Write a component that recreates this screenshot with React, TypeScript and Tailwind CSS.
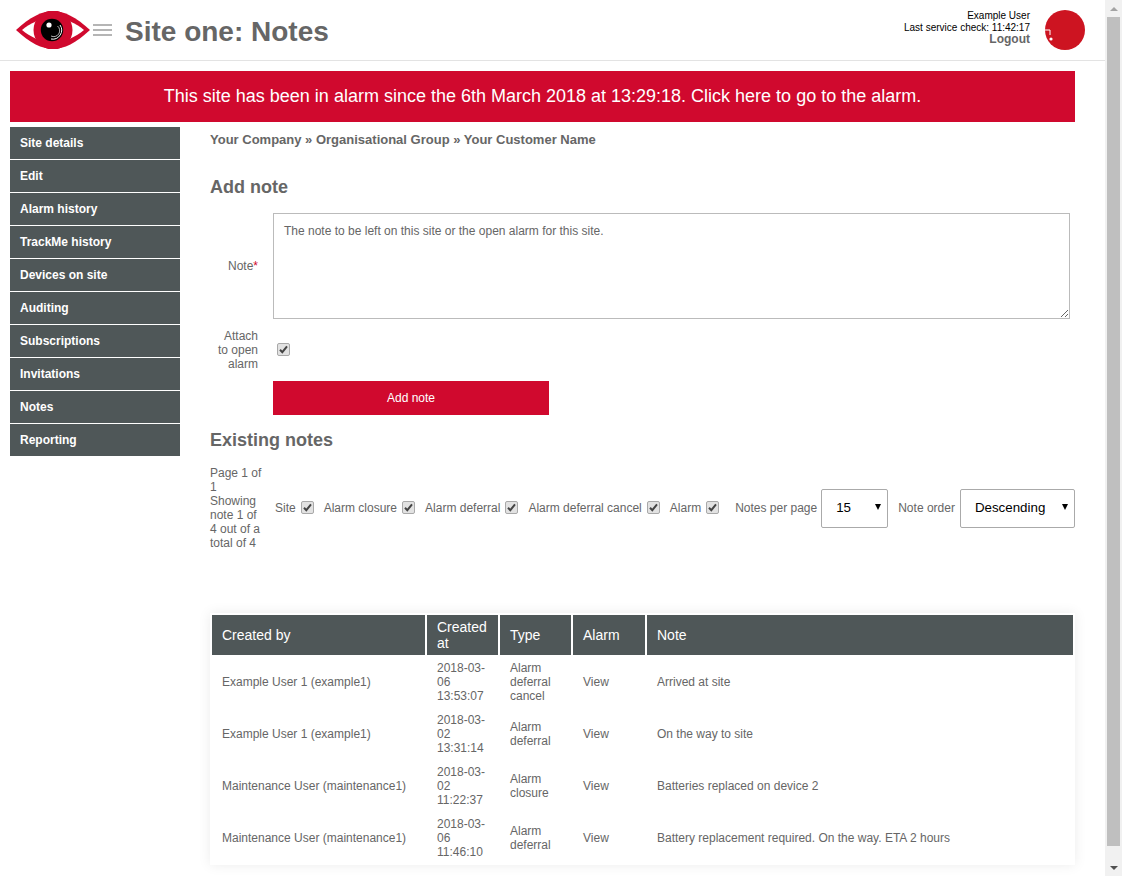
const font = "font-['Liberation_Sans',Arial,sans-serif]";

const sideItems = [
  "Site details",
  "Edit",
  "Alarm history",
  "TrackMe history",
  "Devices on site",
  "Auditing",
  "Subscriptions",
  "Invitations",
  "Notes",
  "Reporting",
];

const filters = ["Site", "Alarm closure", "Alarm deferral", "Alarm deferral cancel", "Alarm"];

const rows = [
  ["Example User 1 (example1)", "2018-03-06 13:53:07", "Alarm deferral cancel", "Arrived at site"],
  ["Example User 1 (example1)", "2018-03-02 13:31:14", "Alarm deferral", "On the way to site"],
  ["Maintenance User (maintenance1)", "2018-03-02 11:22:37", "Alarm closure", "Batteries replaced on device 2"],
  ["Maintenance User (maintenance1)", "2018-03-06 11:46:10", "Alarm deferral", "Battery replacement required. On the way. ETA 2 hours"],
];

function EyeLogo() {
  return (
    <svg width="74" height="38" viewBox="0 0 74 38" className="shrink-0">
      <path d="M0 19 C14 6 26 0 37 0 C48 0 60 6 74 19 C60 32 48 38 37 38 C26 38 14 32 0 19 Z" fill="#d0092e" />
      <path d="M6 19 C14 12 25 7 37 7 C49 7 60 12 68 19 C60 26 49 31 37 31 C25 31 14 26 6 19 Z" fill="#fff" />
      <circle cx="37" cy="19" r="19.5" fill="#d0092e" />
      <circle cx="36" cy="19" r="11.2" fill="#000" />
      <path d="M44 14 A9 9 0 0 1 35 28" fill="none" stroke="#fff" strokeWidth="1" />
      <path d="M41.5 15 A6 6 0 0 1 35 25" fill="none" stroke="#ddd" strokeWidth="0.8" />
      <circle cx="33" cy="14" r="2.6" fill="#fff" />
    </svg>
  );
}

function Tick() {
  return (
    <span className="relative -mt-[1px] block h-[13px] w-[13px] shrink-0">
      <input
        type="checkbox"
        defaultChecked
        className="m-0 block h-[13px] w-[13px] appearance-none rounded-[2px] border border-[#a9a9a9] bg-[#e2e2e2]"
      />
      <svg width="13" height="13" viewBox="0 0 13 13" className="pointer-events-none absolute left-0 top-0">
        <path d="M3 6.8 L5.3 9.2 L10 3.4" fill="none" stroke="#444" strokeWidth="2" />
      </svg>
    </span>
  );
}

function Select({ value, width }: { value: string; width: string }) {
  return (
    <div className={`relative flex h-[39px] items-center rounded-[2px] border border-[#aaa] bg-white pl-[14px] text-[13.33px] text-black ${width}`}>
      {value}
      <span className="absolute right-[6px] top-[14px] h-0 w-0 border-x-[3.5px] border-t-[6px] border-x-transparent border-t-black" />
    </div>
  );
}

export default function App() {
  return (
    <div className={`${font} flex h-[876px] w-[1122px] overflow-hidden bg-white text-[12px] text-[#666]`}>
      <div className="w-[1105px] shrink-0">
        <header className="flex h-[61px] items-center border-b border-[#e3e3e3] pl-[16px] pr-[20px]">
          <EyeLogo />
          <div className="ml-[3px] flex w-[19px] flex-col gap-[3px]">
            <span className="h-[2px] bg-[#b5b5b5]" />
            <span className="h-[2px] bg-[#b5b5b5]" />
            <span className="h-[2px] bg-[#b5b5b5]" />
          </div>
          <h1 className="ml-[13px] pt-[4px] text-[28px] font-bold leading-none">Site one: Notes</h1>
          <div className="ml-auto flex items-center gap-[15px]">
            <div className="mb-[5px] text-right text-[10px] leading-[12px] text-black">
              <div>Example User</div>
              <div>Last service check: 11:42:17</div>
              <div className="text-[12px] font-bold leading-[11px] text-[#666]">Logout</div>
            </div>
            <div className="relative h-[40px] w-[40px] rounded-full bg-[#cd1421]">
              <svg width="10" height="14" viewBox="0 0 10 14" className="absolute left-0 top-[19px]">
                <path d="M0 1 H5 V6" fill="none" stroke="#fff" strokeWidth="1" />
                <circle cx="6" cy="10" r="1.6" fill="#fff" />
              </svg>
            </div>
          </div>
        </header>

        <div className="mx-[10px] mt-[10px] flex h-[51px] w-[1065px] items-center justify-center bg-[#d0092e] text-[18px] text-white">
          This site has been in alarm since the 6th March 2018 at 13:29:18. Click here to go to the alarm.
        </div>

        <div className="mt-[5px] flex pl-[10px]">
          <nav className="flex w-[170px] shrink-0 flex-col gap-[1px]">
            {sideItems.map((item) => (
              <div key={item} className="flex h-[32px] items-center bg-[#4f5758] pl-[10px] text-[12px] font-bold text-white">
                {item}
              </div>
            ))}
          </nav>

          <main className="ml-[30px] w-[865px]">
            <div className="pt-[4px] text-[13px] font-bold leading-[18px]">
              Your Company » Organisational Group » Your Customer Name
            </div>

            <h2 className="mt-[27px] text-[18px] font-bold leading-[22px]">Add note</h2>

            <div className="mt-[15px] flex items-center">
              <div className="w-[48px] text-right">
                Note<span className="text-[#d0092e]">*</span>
              </div>
              <textarea
                readOnly
                className="ml-[15px] h-[106px] w-[797px] border border-[#bbb] px-[10px] py-[10px] text-[12px] leading-[14px] text-[#666] outline-none"
                defaultValue="The note to be left on this site or the open alarm for this site."
              />
            </div>

            <div className="mt-[10px] flex items-center">
              <div className="w-[48px] text-right leading-[14px]">
                Attach
                <br />
                to open
                <br />
                alarm
              </div>
              <div className="ml-[19px] flex"><Tick /></div>
            </div>

            <button className="ml-[63px] mt-[10px] block h-[34px] w-[276px] bg-[#d0092e] text-[12px] text-white">
              Add note
            </button>

            <h2 className="mt-[14px] text-[18px] font-bold leading-[22px]">Existing notes</h2>

            <div className="mt-[15px] flex items-center">
              <div className="w-[55px] leading-[14px]">
                Page 1 of 1<br />Showing note 1 of 4 out of a total of 4
              </div>
              <div className="ml-[10px] flex items-center gap-[10px]">
                {filters.map((f) => (
                  <label key={f} className="flex items-center gap-[5px]">
                    {f}
                    <Tick />
                  </label>
                ))}
              </div>
              <span className="ml-[16px]">Notes per page</span>
              <div className="ml-[4px]"><Select value="15" width="w-[67px]" /></div>
              <span className="ml-[10px]">Note order</span>
              <div className="ml-[5px]"><Select value="Descending" width="w-[115px]" /></div>
            </div>

            <div className="mt-[63px] bg-white px-[2px] pb-[1px] pt-[2px] shadow-[0_0_12px_rgba(0,0,0,0.08)]">
              <div className="grid grid-cols-[213px_71px_71px_72px_1fr] gap-x-[2px]">
                {["Created by", "Created at", "Type", "Alarm", "Note"].map((h) => (
                  <div key={h} className="flex h-[40px] items-center bg-[#4f5758] px-[10px] text-[14px] leading-[16px] text-white">
                    {h}
                  </div>
                ))}
                {rows.map((r, i) => (
                  <div key={i} className="contents">
                    <div className={`flex items-center px-[10px] ${i === 0 ? "h-[53px]" : "h-[52px]"}`}>{r[0]}</div>
                    <div className="flex items-center px-[10px] leading-[14px]">{r[1]}</div>
                    <div className="flex items-center px-[10px] leading-[14px]">{r[2]}</div>
                    <div className="flex items-center px-[10px]">View</div>
                    <div className="flex items-center px-[10px]">{r[3]}</div>
                  </div>
                ))}
              </div>
            </div>
          </main>
        </div>
      </div>

      <div className="flex w-[17px] shrink-0 flex-col items-center bg-[#f1f1f1]">
        <div className="flex h-[17px] items-center justify-center">
          <span className="h-0 w-0 border-x-[4px] border-b-[4px] border-x-transparent border-b-[#a3a3a3]" />
        </div>
        <div className="h-[829px] w-[13px] bg-[#bfbfbf]" />
        <div className="mt-auto flex h-[17px] items-center justify-center">
          <span className="h-0 w-0 border-x-[4px] border-t-[4px] border-x-transparent border-t-[#505050]" />
        </div>
      </div>
    </div>
  );
}
